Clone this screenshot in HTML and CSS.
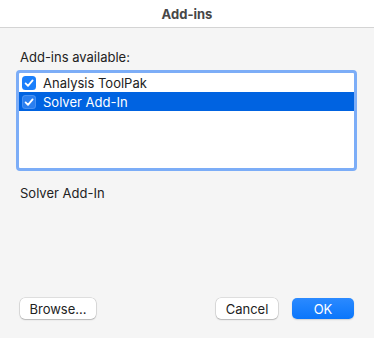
FILE: index.html
```html
<!DOCTYPE html>
<html lang="en">
<head>
    <meta charset="UTF-8">
    <meta name="viewport" content="width=device-width, initial-scale=1.0">
    <title>Add-ins</title>
    <link rel="stylesheet" href="styles.css">
</head>
<body>
    <div class="dialog">
        <div class="title-bar">Add-ins</div>

        <div class="panel">
            <div class="list-label">Add-ins available:</div>
            <div class="list-box">
                <div class="list-row">
                    <span class="check"><svg viewBox="0 0 14 14" width="14" height="14"><path d="M3.6 7.4 L6 9.8 L10.6 4.4" fill="none" stroke="#fff" stroke-width="1.8" stroke-linecap="round" stroke-linejoin="round"/></svg></span>
                    <span>Analysis ToolPak</span>
                </div>
                <div class="list-row selected">
                    <span class="check"><svg viewBox="0 0 14 14" width="14" height="14"><path d="M3.6 7.4 L6 9.8 L10.6 4.4" fill="none" stroke="#fff" stroke-width="1.8" stroke-linecap="round" stroke-linejoin="round"/></svg></span>
                    <span>Solver Add-In</span>
                </div>
            </div>
            <div class="description">Solver Add-In</div>
        </div>

        <div class="footer">
            <button class="btn wide">Browse...</button>
            <div class="footer-right">
                <button class="btn">Cancel</button>
                <button class="btn primary">OK</button>
            </div>
        </div>
    </div>
</body>
</html>
```

FILE: styles.css
```css
body {
    margin: 0;
    padding: 0;
    background-color: #f5f5f5;
    color: #222222;
    font-family: Inter, "Liberation Sans", sans-serif;
    font-size: 13px;
}

.dialog {
    height: 338px;
    display: flex;
    flex-direction: column;
}

.title-bar {
    height: 27px;
    background: #ffffff;
    border-bottom: 1px solid #d4d4d4;
    display: flex;
    justify-content: center;
    align-items: center;
    font-weight: 700;
    color: #474747;
}

.panel {
    padding: 21px 17px 0 16px;
}

.list-label {
    padding-left: 4px;
    line-height: 16px;
    margin-bottom: 5px;
}

.list-box {
    height: 95px;
    background: #ffffff;
    border: 3.5px solid #7cadf7;
    border-radius: 4px;
}

.list-row {
    height: 19px;
    display: flex;
    align-items: center;
    padding-left: 3px;
    gap: 7px;
}

.list-row.selected {
    background: #0063e1;
    color: #ffffff;
}

.check {
    width: 14px;
    height: 14px;
    border-radius: 3.5px;
    background: #1a7ffb;
    display: flex;
}

.list-row.selected .check {
    background: #2a7ff0;
    box-shadow: inset 0 0 0 1px rgba(255, 255, 255, 0.15);
}

.description {
    padding-left: 4px;
    margin-top: 14px;
    line-height: 16px;
}

.footer {
    margin-top: auto;
    padding: 0 20px 19px 20px;
    display: flex;
    justify-content: space-between;
}

.footer-right {
    display: flex;
    gap: 14px;
}

.btn {
    width: 62px;
    height: 21px;
    padding: 0;
    background: #ffffff;
    border: none;
    border-radius: 5px;
    box-shadow: 0 0 0 0.5px rgba(0, 0, 0, 0.18), 0 1px 1.5px rgba(0, 0, 0, 0.18);
    font-family: inherit;
    font-size: 13px;
    color: #222222;
}

.btn.wide {
    width: 76px;
}

.btn.primary {
    background: linear-gradient(#2b8aff, #0a76fb);
    color: #ffffff;
    box-shadow: 0 1px 1.5px rgba(0, 0, 0, 0.15);
}
```
